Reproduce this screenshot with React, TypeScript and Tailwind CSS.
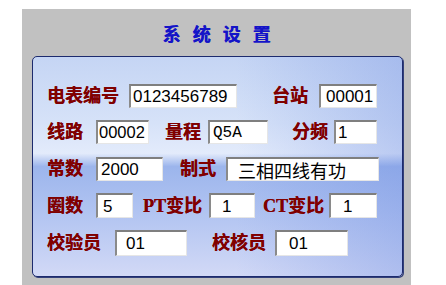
import React from 'react'

const cjk = "font-['Noto_Sans_CJK_SC',sans-serif]"
const labelCls = "shrink-0 font-['Liberation_Serif','Noto_Sans_CJK_SC',serif] text-[18px] font-bold leading-none text-[#800000] whitespace-nowrap [text-shadow:0.3px_0_0_#800000]"
const boxCls = "shrink-0 h-[24px] flex items-center bg-white border-t-2 border-l-2 border-t-[#7f7f7f] border-l-[#8a8a8a] border-b border-r border-b-[#e6e6e6] border-r-[#e6e6e6] text-black leading-none whitespace-nowrap overflow-hidden"
const numFont = "font-['Liberation_Sans',sans-serif] text-[17px]"

function Label({ text, className }: { text: string; className: string }) {
  return <span className={`${labelCls} ${className}`}>{text}</span>
}

function Box({ value, className, font = numFont }: { value: string; className: string; font?: string }) {
  return <div className={`${boxCls} ${font} ${className}`}>{value}</div>
}

export default function App() {
  return (
    <div className="w-[446px] h-[285px] bg-white pt-[9px] pl-[22px] overflow-hidden">
      <div className="w-[389px] h-[276px] bg-[#c1c1c1] flex flex-col">
        {/* title */}
        <div className="h-[47px] flex items-center justify-center pt-[2px]">
          <h1 className={`${cjk} text-[18px] font-bold text-[#1414c8] tracking-[12px] pl-[12px] [text-shadow:0.6px_0_0_#1414c8]`}>系统设置</h1>
        </div>

        {/* settings panel */}
        <div className="ml-[10px] w-[371px] h-[221px] rounded-[5px] border border-[#1d2b6e] shadow-[1px_1px_0_#33407a] pl-[14px] pt-[27px] bg-[linear-gradient(90deg,rgba(255,255,255,0)_55%,rgba(110,140,225,0.35)_100%),linear-gradient(180deg,#c5d5f4_0%,#d6e2f8_30%,#e3ebfb_44%,#9cb5ec_50%,#b0c3f1_70%,#d2d9f6_100%)]">
          {/* row 1 */}
          <div className="flex items-center h-[24px]">
            <Label text="电表编号" className="w-[76px]" />
            <Box value="0123456789" className="ml-[6px] w-[108px] pl-[2px]" />
            <Label text="台站" className="ml-[35px] w-[40px]" />
            <Box value="00001" className="ml-[7px] w-[58px] pl-[5px]" />
          </div>

          {/* row 2 */}
          <div className="flex items-center h-[24px] mt-[12px]">
            <Label text="线路" className="w-[38px]" />
            <Box value="00002" className="ml-[11px] w-[53px] pl-[1px]" font="font-['Liberation_Sans',sans-serif] text-[16.5px]" />
            <Label text="量程" className="ml-[16px] w-[38px]" />
            <Box value="Q5A" className="ml-[5px] w-[60px] pl-[3px]" font="font-['Liberation_Mono',monospace] text-[16px]" />
            <Label text="分频" className="ml-[24px] w-[38px]" />
            <Box value="1" className="ml-[4px] w-[43px] pl-[2px]" />
          </div>

          {/* row 3 */}
          <div className="flex items-center h-[24px] mt-[13px]">
            <Label text="常数" className="w-[38px]" />
            <Box value="2000" className="ml-[11px] w-[67px] pl-[3px]" />
            <Label text="制式" className="ml-[17px] w-[38px]" />
            <Box value="三相四线有功" className="ml-[8px] w-[153px] pl-[10px]" font={`${cjk} text-[18px]`} />
          </div>

          {/* row 4 */}
          <div className="flex items-center h-[25px] mt-[12px]">
            <Label text="圈数" className="w-[38px]" />
            <Box value="5" className="ml-[11px] w-[37px] h-[25px] pl-[5px]" />
            <Label text="PT变比" className="ml-[10px] w-[63px]" />
            <Box value="1" className="ml-[3px] w-[46px] h-[25px] pl-[11px]" />
            <Label text="CT变比" className="ml-[8px] w-[62px]" />
            <Box value="1" className="ml-[4px] w-[48px] h-[25px] pl-[12px]" />
          </div>

          {/* row 5 */}
          <div className="flex items-center h-[26px] mt-[12px]">
            <Label text="校验员" className="w-[57px]" />
            <Box value="01" className="ml-[11px] w-[72px] h-[26px] pl-[9px]" />
            <Label text="校核员" className="ml-[25px] w-[57px]" />
            <Box value="01" className="ml-[6px] w-[73px] h-[26px] pl-[12px]" />
          </div>
        </div>
      </div>
    </div>
  )
}
